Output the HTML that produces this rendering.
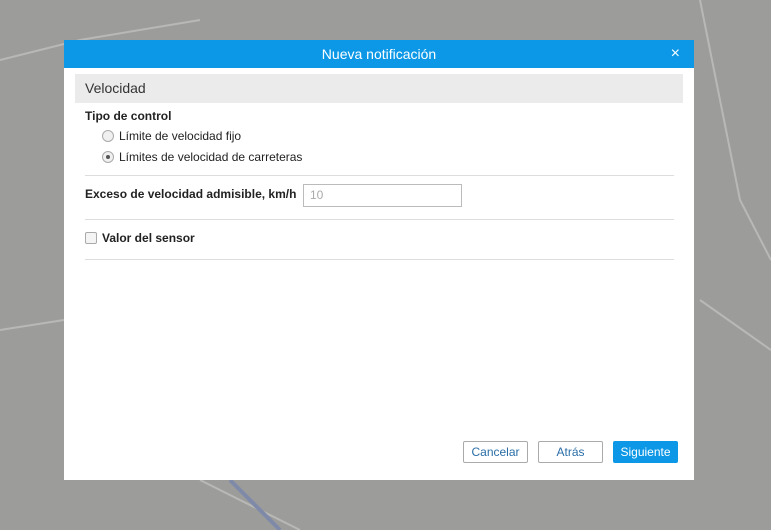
<!DOCTYPE html>
<html><head><meta charset="utf-8"><style>
body{margin:0;width:771px;height:530px;overflow:hidden;background:#9c9d9b;font-family:"Liberation Sans",Arial,sans-serif;position:relative}
.map{position:absolute;inset:0}
.dlg{position:absolute;left:64px;top:40px;width:630px;height:440px;background:#fff}
.hd{height:28px;background:#0c98e6;color:#fff;font-size:14px;text-align:center;line-height:28px;position:relative}
.x{position:absolute;right:14px;top:0;font-size:16px}
.sec{position:absolute;left:11px;top:34px;width:608px;height:29px;background:#ebebeb;font-size:14px;line-height:29px;text-indent:10px;color:#333}
.t{position:absolute;font-size:12px;color:#222}
.b{font-weight:bold}
.hr{position:absolute;left:21px;width:589px;height:1px;background:#ddd}
.r{position:absolute;width:10px;height:10px;border:1px solid #aaa;border-radius:50%;background:#f0f0f0}
.btn{position:absolute;top:401px;height:20px;border:1px solid #aaa;border-radius:2px;font-size:12px;color:#2a6ea8;text-align:center;line-height:20px;box-sizing:border-box;height:22px}
</style></head><body>
<svg class="map" width="771" height="530"><g stroke="#b8b8b6" stroke-width="2" fill="none">
<path d="M0 60 L80 40 L200 20"/><path d="M700 0 L740 200 L771 260"/><path d="M700 300 L771 350"/><path d="M200 480 L300 530"/><path d="M0 330 L64 320"/></g>
<path d="M230 480 Q260 510 280 530" stroke="#7f8aa8" stroke-width="4" fill="none"/></svg>
<div class="dlg">
<div class="hd">Nueva notificación<span class="x">×</span></div>
<div class="sec">Velocidad</div>
<div class="t b" style="left:21px;top:69px">Tipo de control</div>
<div class="r" style="left:38px;top:90px"></div>
<div class="t" style="left:55px;top:89px">Límite de velocidad fijo</div>
<div class="r" style="left:38px;top:111px"><div style="width:4px;height:4px;border-radius:50%;background:#555;margin:3px"></div></div>
<div class="t" style="left:55px;top:110px">Límites de velocidad de carreteras</div>
<div class="hr" style="top:135px"></div>
<div class="t b" style="left:21px;top:147px">Exceso de velocidad admisible, km/h</div>
<div style="position:absolute;left:239px;top:144px;width:157px;height:21px;border:1px solid #bbb;font-size:12px;color:#aaa;line-height:21px;text-indent:6px">10</div>
<div class="hr" style="top:179px"></div>
<div style="position:absolute;left:21px;top:192px;width:10px;height:10px;border:1px solid #aaa;border-radius:2px;background:#f4f4f4"></div>
<div class="t b" style="left:38px;top:191px">Valor del sensor</div>
<div class="hr" style="top:219px"></div>
<div class="btn" style="left:399px;width:65px">Cancelar</div>
<div class="btn" style="left:474px;width:65px">Atrás</div>
<div class="btn" style="left:549px;width:65px;background:#0c98e6;border-color:#0c98e6;color:#fff">Siguiente</div>
</div>
</body></html>
